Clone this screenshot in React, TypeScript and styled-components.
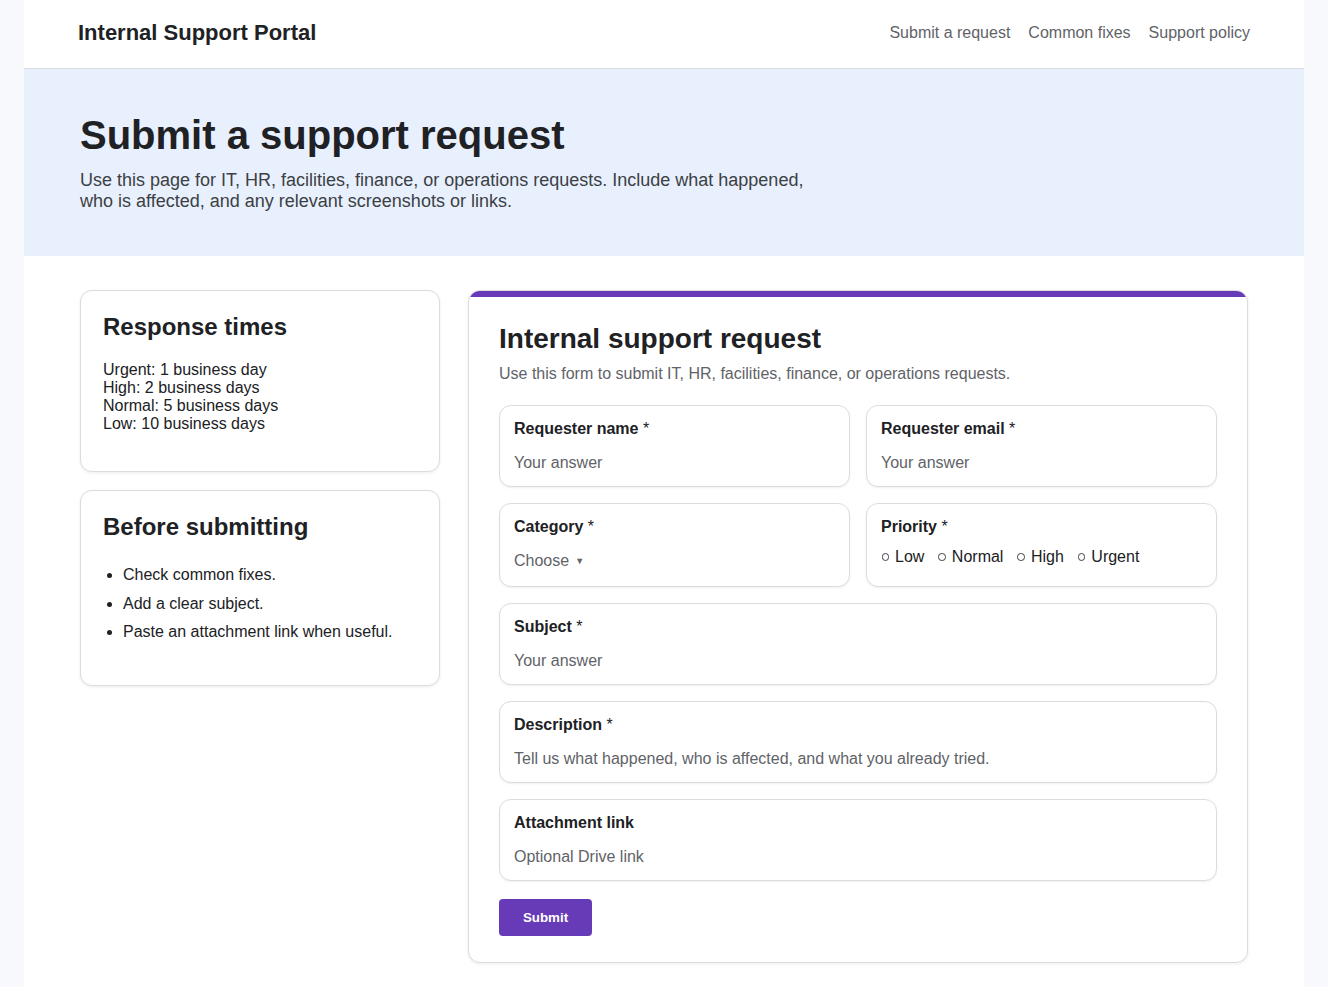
import React from 'react'
import styled, { createGlobalStyle } from 'styled-components'

const GlobalStyle = createGlobalStyle`
  * {
    box-sizing: border-box;
  }
  html, body {
    margin: 0;
    padding: 0;
    background: #f7f9fc;
    font-family: "Liberation Sans", Arial, sans-serif;
    color: #202124;
  }
`

const Page = styled.div`
  width: 1280px;
  min-height: 987px;
  margin: 0 auto;
  background: #fff;
`

const Header = styled.header`
  height: 69px;
  padding: 0 54px 2px;
  display: flex;
  align-items: center;
  justify-content: space-between;
  border-bottom: 1px solid #dadce0;
`

const Brand = styled.div`
  font-size: 22px;
  font-weight: 700;
`

const Nav = styled.nav`
  display: flex;
  gap: 18px;
`

const NavLink = styled.a`
  font-size: 16px;
  color: #5f6368;
  text-decoration: none;
`

const Hero = styled.section`
  height: 187px;
  padding: 42px 56px 0;
  background: #e8f0fe;
`

const HeroTitle = styled.h1`
  margin: 0 0 11px;
  font-size: 40px;
  line-height: 48px;
  font-weight: 700;
`

const HeroText = styled.p`
  margin: 0;
  max-width: 760px;
  font-size: 18px;
  line-height: 21px;
  color: #3c4043;
`

const Main = styled.main`
  display: grid;
  grid-template-columns: 360px 780px;
  gap: 28px;
  padding: 34px 56px 24px;
  align-items: start;
`

const Sidebar = styled.aside`
  display: flex;
  flex-direction: column;
  gap: 18px;
`

const SideCard = styled.section`
  padding: 22px;
  background: #fff;
  border: 1px solid #dadce0;
  border-radius: 12px;
  box-shadow: 0 1px 3px rgba(60, 64, 67, 0.1);
`

const SideTitle = styled.h2`
  margin: 0;
  font-size: 24px;
  line-height: 28px;
  font-weight: 700;
`

const TimeLines = styled.div`
  margin: 20px 0 16px;
  font-size: 16px;
  line-height: 18px;
`

const Checklist = styled.ul`
  margin: 25px 0 22px;
  padding: 0 0 0 20px;
  font-size: 16px;
  line-height: 18px;

  li + li {
    margin-top: 10.5px;
  }
`

const FormCard = styled.section`
  background: #fff;
  border: 1px solid #dadce0;
  border-radius: 12px;
  overflow: hidden;
  box-shadow: 0 1px 3px rgba(60, 64, 67, 0.1);
`

const FormAccent = styled.div`
  height: 6px;
  background: #673ab7;
`

const FormBody = styled.div`
  padding: 26px 30px 26px;
`

const FormTitle = styled.h2`
  margin: 0 0 9px;
  font-size: 28px;
  line-height: 32px;
  font-weight: 700;
`

const FormIntro = styled.p`
  margin: 0 0 21px;
  font-size: 16px;
  line-height: 20px;
  color: #5f6368;
`

const FieldGrid = styled.div`
  display: grid;
  grid-template-columns: 1fr 1fr;
  gap: 16px;
`

const Field = styled.div<{ $wide?: boolean; $tall?: boolean }>`
  grid-column: ${(p) => (p.$wide ? '1 / -1' : 'auto')};
  height: ${(p) => (p.$tall ? '84px' : '82px')};
  padding: 14px;
  background: #fff;
  border: 1px solid #dadce0;
  border-radius: 12px;
  box-shadow: 0 1px 2px rgba(60, 64, 67, 0.08);
`

const FieldLabel = styled.div`
  margin-bottom: 16px;
  font-size: 16px;
  line-height: 18px;
  font-weight: 700;
`

const Required = styled.span`
  font-weight: 400;
`

const Placeholder = styled.div`
  font-size: 16px;
  line-height: 18px;
  color: #5f6368;
`

const Caret = styled.span`
  margin-left: 6px;
  font-size: 9px;
  vertical-align: 2px;
`

const RadioRow = styled.div`
  display: flex;
  gap: 14px;
  margin: -4px 0 0 0.5px;
  font-size: 16px;
  line-height: 18px;
`

const RadioItem = styled.span`
  display: inline-flex;
  align-items: center;
  gap: 6px;
`

const RadioDot = styled.span`
  width: 7.5px;
  height: 7.5px;
  border: 1px solid #3c4043;
  border-radius: 50%;
`

const SubmitButton = styled.button`
  display: block;
  width: 93px;
  height: 37px;
  margin-top: 18px;
  padding: 0;
  background: #673ab7;
  border: 0;
  border-radius: 4px;
  color: #fff;
  font-family: "Liberation Sans", Arial, sans-serif;
  font-size: 13.333px;
  font-weight: 700;
`

const priorities = ['Low', 'Normal', 'High', 'Urgent']

const App: React.FC = () => {
  return (
    <Page>
      <GlobalStyle />
      <Header>
        <Brand>Internal Support Portal</Brand>
        <Nav>
          <NavLink>Submit a request</NavLink>
          <NavLink>Common fixes</NavLink>
          <NavLink>Support policy</NavLink>
        </Nav>
      </Header>
      <Hero>
        <HeroTitle>Submit a support request</HeroTitle>
        <HeroText>
          Use this page for IT, HR, facilities, finance, or operations requests. Include what happened,
          who is affected, and any relevant screenshots or links.
        </HeroText>
      </Hero>
      <Main>
        <Sidebar>
          <SideCard>
            <SideTitle>Response times</SideTitle>
            <TimeLines>
              Urgent: 1 business day
              <br />
              High: 2 business days
              <br />
              Normal: 5 business days
              <br />
              Low: 10 business days
            </TimeLines>
          </SideCard>
          <SideCard>
            <SideTitle>Before submitting</SideTitle>
            <Checklist>
              <li>Check common fixes.</li>
              <li>Add a clear subject.</li>
              <li>Paste an attachment link when useful.</li>
            </Checklist>
          </SideCard>
        </Sidebar>
        <FormCard>
          <FormAccent />
          <FormBody>
            <FormTitle>Internal support request</FormTitle>
            <FormIntro>Use this form to submit IT, HR, facilities, finance, or operations requests.</FormIntro>
            <FieldGrid>
              <Field>
                <FieldLabel>Requester name <Required>*</Required></FieldLabel>
                <Placeholder>Your answer</Placeholder>
              </Field>
              <Field>
                <FieldLabel>Requester email <Required>*</Required></FieldLabel>
                <Placeholder>Your answer</Placeholder>
              </Field>
              <Field $tall>
                <FieldLabel>Category <Required>*</Required></FieldLabel>
                <Placeholder>Choose<Caret>▼</Caret></Placeholder>
              </Field>
              <Field $tall>
                <FieldLabel>Priority <Required>*</Required></FieldLabel>
                <RadioRow>
                  {priorities.map((p) => (
                    <RadioItem key={p}>
                      <RadioDot />
                      {p}
                    </RadioItem>
                  ))}
                </RadioRow>
              </Field>
              <Field $wide>
                <FieldLabel>Subject <Required>*</Required></FieldLabel>
                <Placeholder>Your answer</Placeholder>
              </Field>
              <Field $wide>
                <FieldLabel>Description <Required>*</Required></FieldLabel>
                <Placeholder>Tell us what happened, who is affected, and what you already tried.</Placeholder>
              </Field>
              <Field $wide>
                <FieldLabel>Attachment link</FieldLabel>
                <Placeholder>Optional Drive link</Placeholder>
              </Field>
            </FieldGrid>
            <SubmitButton>Submit</SubmitButton>
          </FormBody>
        </FormCard>
      </Main>
    </Page>
  )
}

export default App
